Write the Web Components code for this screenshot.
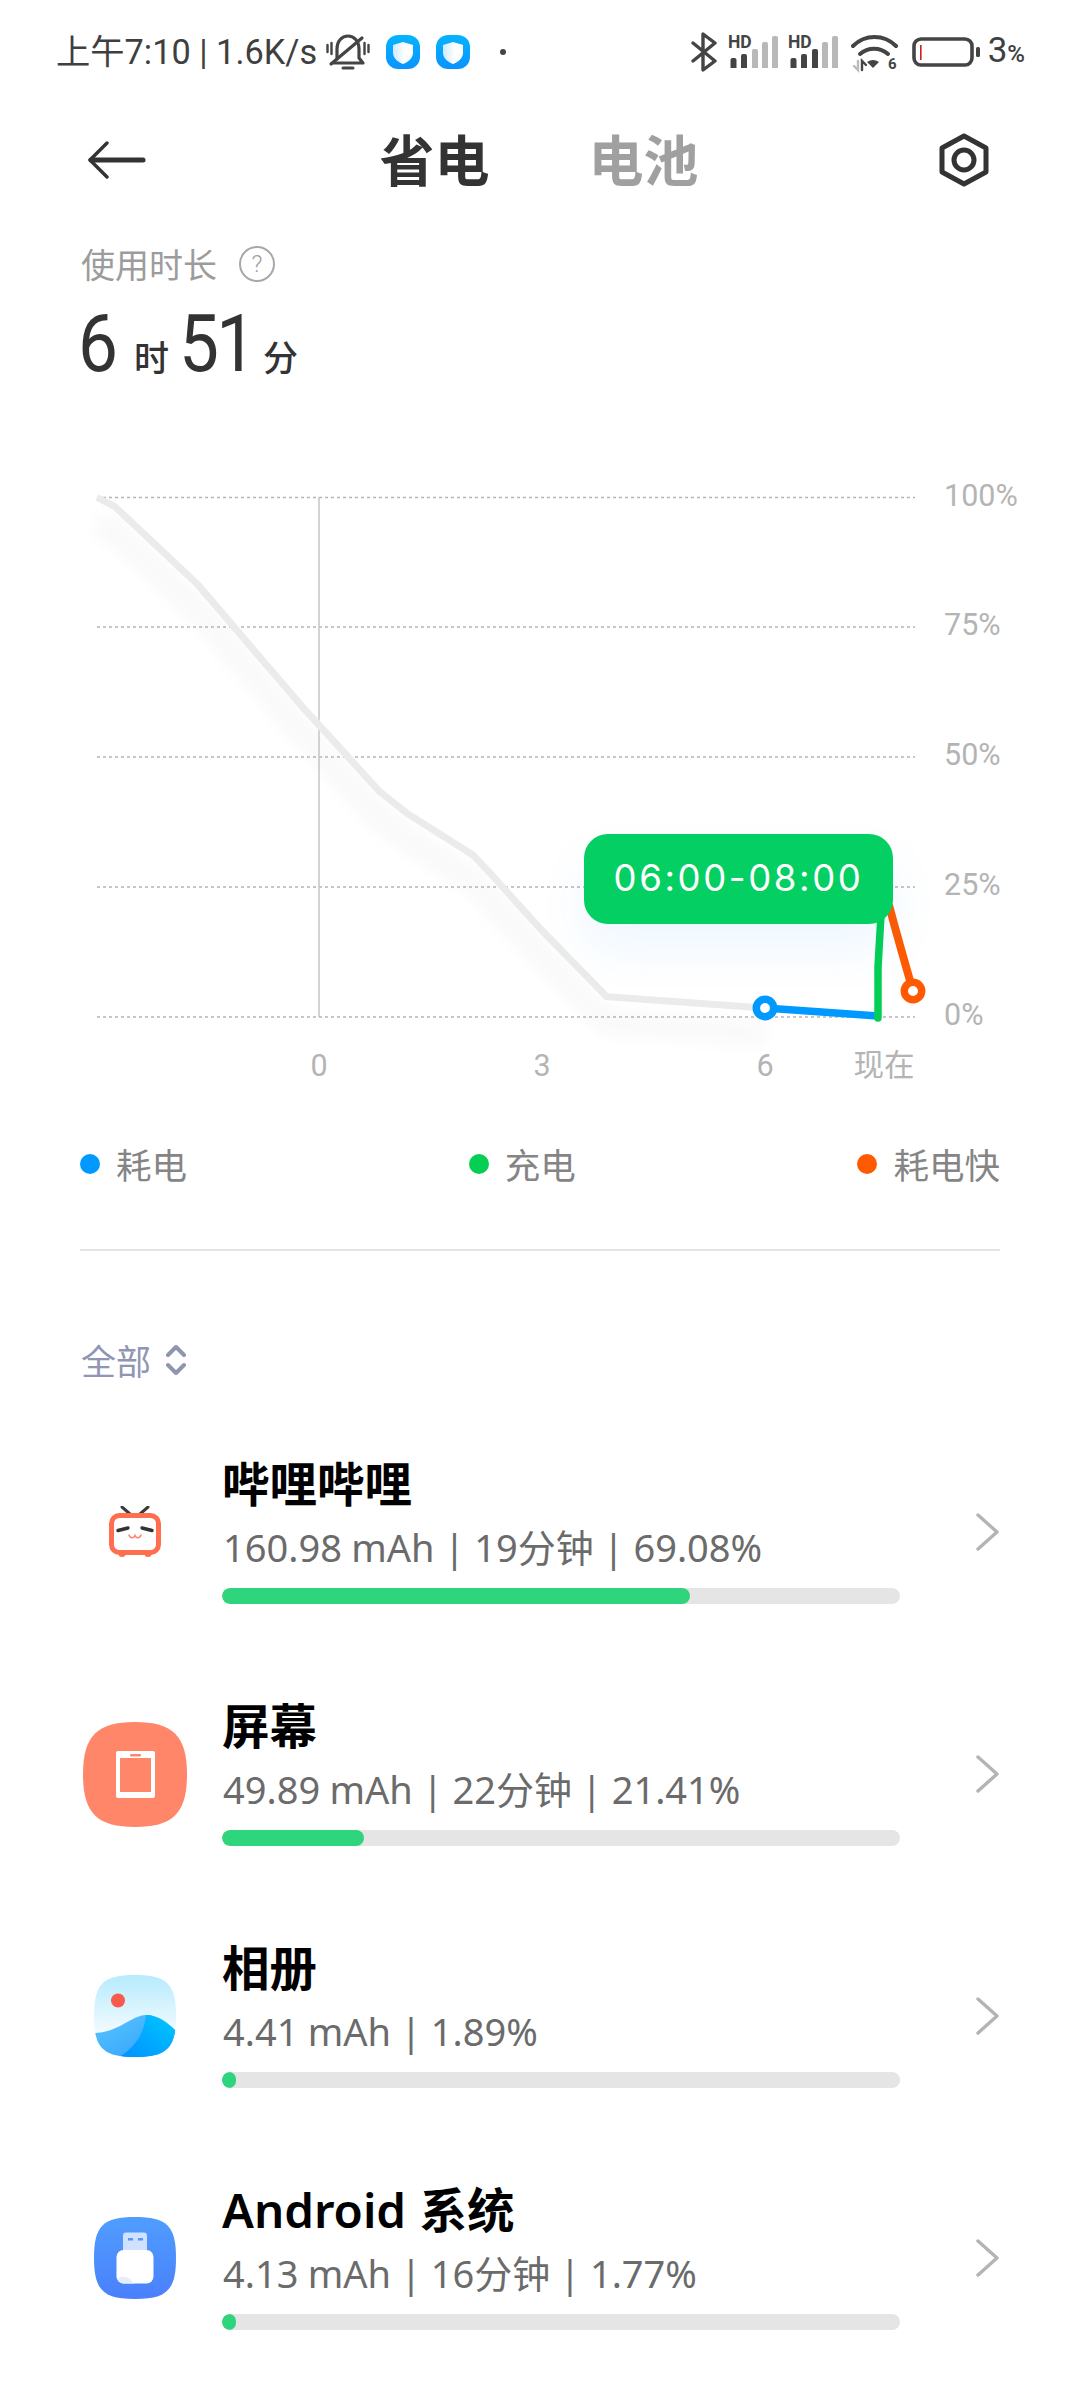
<!DOCTYPE html>
<html lang="zh">
<head>
<meta charset="utf-8">
<title>省电</title>
<style>
  html, body { margin: 0; background: #fff; }
  body { width: 1080px; height: 2400px; overflow: hidden; font-family: Roboto, "Noto Sans CJK SC", sans-serif; }
</style>
</head>
<body>
<status-bar></status-bar>
<nav-header></nav-header>
<usage-summary hours="6" minutes="51"></usage-summary>
<battery-chart></battery-chart>
<chart-legend></chart-legend>
<filter-row label="全部"></filter-row>

<app-row name="哔哩哔哩" detail="160.98 mAh | 19分钟 | 69.08%" percent="69">
  <svg slot="icon" width="52" height="52" viewBox="0 0 52 52">
    <path d="M13 1 21 8M39 1 31 8" stroke="#3b3b3b" stroke-width="3" stroke-linecap="round"/>
    <circle cx="13" cy="47.500" r="3.600" fill="#ff6f4f"/><circle cx="39" cy="47.500" r="3.600" fill="#ff6f4f"/>
    <rect x="2.500" y="9.500" width="47" height="37" rx="8" fill="#fff" stroke="#ff6f4f" stroke-width="5"/>
    <path d="M9 24.500 19 22M33 22 43 24.500" stroke="#333" stroke-width="3.400" stroke-linecap="round"/>
    <path d="M20 29c1 3.500 5 3.500 6 .5 1 3 5 3 6-.5" fill="none" stroke="#ff8378" stroke-width="1.500" stroke-linecap="round"/>
  </svg>
</app-row>
<app-row name="屏幕" detail="49.89 mAh | 22分钟 | 21.41%" percent="21">
  <svg slot="icon" width="104" height="105" viewBox="0 0 104 105">
    <path d="M52 0C90 0 104 14 104 52.500S90 105 52 105 0 91 0 52.500 14 0 52 0Z" fill="#ff8668"/>
    <rect x="33" y="29" width="39" height="47" rx="2" fill="#fff"/>
    <rect x="37" y="36" width="31" height="34" fill="#ff8668"/>
    <rect x="47" y="32" width="11" height="2.500" rx="1.200" fill="#ff8668"/>
  </svg>
</app-row>
<app-row name="相册" detail="4.41 mAh | 1.89%" percent="1">
  <svg slot="icon" width="82" height="82" viewBox="0 0 82 82">
    <defs>
      <linearGradient id="sky" x1="0" y1="0" x2="0" y2="1"><stop offset="0" stop-color="#b6ebfd"/><stop offset=".7" stop-color="#f2fbff"/></linearGradient>
      <linearGradient id="sea" x1="0" y1="0" x2="1" y2="1"><stop offset="0" stop-color="#5ac6ff"/><stop offset="1" stop-color="#2f9dfc"/></linearGradient>
      <linearGradient id="sea2" x1="1" y1="0" x2="0" y2="1"><stop offset="0" stop-color="#00c8ff"/><stop offset="1" stop-color="#0090ff"/></linearGradient>
      <clipPath id="sq"><path d="M41 0C73 0 82 9 82 41S73 82 41 82 0 73 0 41 9 0 41 0Z"/></clipPath>
    </defs>
    <g clip-path="url(#sq)">
      <rect width="82" height="82" fill="url(#sky)"/>
      <path d="M0 58C24 58 38 40 52 40 64 40 74 48 82 56V82H0Z" fill="url(#sea)"/>
      <path d="M25 82C42 72 50 58 52 40 64 40 74 48 82 56V82Z" fill="url(#sea2)"/>
      <ellipse cx="24" cy="25.500" rx="7" ry="7" fill="#fa5a4c"/>
    </g>
  </svg>
</app-row>
<app-row name="Android 系统" detail="4.13 mAh | 16分钟 | 1.77%" percent="1">
  <svg slot="icon" width="82" height="82" viewBox="0 0 82 82">
    <defs><linearGradient id="blue" x1="0" y1="0" x2="0" y2="1"><stop offset="0" stop-color="#4f9dff"/><stop offset="1" stop-color="#4a80fb"/></linearGradient></defs>
    <path d="M41 0C73 0 82 9 82 41S73 82 41 82 0 73 0 41 9 0 41 0Z" fill="url(#blue)"/>
    <rect x="29" y="15.500" width="24" height="20" rx="3" fill="#cfe1ff"/>
    <rect x="34" y="21" width="5" height="2.500" fill="#5a97fb"/><rect x="44" y="21" width="5" height="2.500" fill="#5a97fb"/>
    <rect x="22.500" y="33" width="37" height="33.500" rx="7" fill="#fff"/>
    <path d="M24 61C30 58 36 60 40 66.500H29C27 66.500 25 64 24 61Z" fill="#e6eefb"/>
  </svg>
</app-row>

<script>
class StatusBar extends HTMLElement {
  constructor() {
    super();
    this.shadowDOM = this.attachShadow({mode: 'open'});
  }
  connectedCallback() {
    this.shadowDOM.innerHTML = `${this.templateCss()}${this.template()}`;
  }
  bars(dark) {
    const xs = [2.5, 13, 24, 34, 44], tops = [23, 19, 14, 7, 1];
    return xs.map((x, i) => `<path d="M${x} 33V${tops[i] + 2}q0-2 2-2h2q2 0 2 2V33Z" fill="${i < dark ? '#444' : '#b8b8b8'}"/>`).join('');
  }
  signal(dark) {
    return `<svg width="50" height="42" viewBox="0 -4 50 42">
      <text x="0" y="13" font-family="Roboto" font-weight="700" font-size="17.500" fill="#444">HD</text>${this.bars(dark)}
    </svg>`;
  }
  shield() {
    return `<svg width="34" height="34" viewBox="0 0 34 34">
      <defs><linearGradient id="sb" x1="0" y1="0" x2="0" y2="1"><stop offset="0" stop-color="#05b4ff"/><stop offset="1" stop-color="#0a93ff"/></linearGradient>
      <linearGradient id="sf" x1="0" y1="0" x2="1" y2="0"><stop offset="0" stop-color="#cdeafd"/><stop offset=".6" stop-color="#fff"/></linearGradient></defs>
      <rect width="34" height="34" rx="12" fill="url(#sb)"/>
      <path d="M17 7 27 10V18C27 23 22 27 17 29 12 27 7 23 7 18V10Z" fill="url(#sf)"/>
    </svg>`;
  }
  template() {
    return `
      <div class="left">
        <span class="clock">上午7:10 | 1.6K/s</span>
        <svg class="bell" width="44" height="40" viewBox="0 0 44 40" fill="none" stroke="#444" stroke-width="3.200" stroke-linecap="round" stroke-linejoin="round">
          <path d="M11 27V17C11 9 16 4 22 4 28 4 33 9 33 17V26L37 31H7"/>
          <path d="M5 32 36 6"/>
          <path d="M1.500 13V20M5.500 11V22M42.500 13V20M38.500 11V22" stroke-width="2.400"/>
          <path d="M17 36H27" stroke-width="3"/>
        </svg>
        ${this.shield()}${this.shield()}
        <i class="dot"></i>
      </div>
      <div class="right">
        <svg class="bt" width="26" height="40" viewBox="0 0 26 40" fill="none" stroke="#444" stroke-width="3.400" stroke-linecap="round" stroke-linejoin="round">
          <path d="M2 11 24 29 12 38V2L24 11 2 29"/>
        </svg>
        ${this.signal(2)}${this.signal(3)}
        <svg class="wifi" width="48" height="44" viewBox="0 -4 48 44" fill="none" stroke="#444" stroke-linecap="round">
          <path d="M2 12C14 0 33 0 45 12" stroke-width="4"/>
          <path d="M9 20C17 13 29 13 37 20" stroke-width="4"/>
          <path d="M16 28Q22 24 28 28L22 34Z" fill="#444" stroke="none"/>
          <path d="M7 27V36L3 32" stroke="#bbb" stroke-width="2.400"/><path d="M11 36V27L15 31" stroke-width="2.400"/>
          <text x="37" y="35" font-family="Roboto" font-weight="700" font-size="15" fill="#444" stroke="none">6</text>
        </svg>
        <svg class="batt" width="70" height="30" viewBox="0 0 70 30">
          <rect x="2" y="2" width="58" height="26" rx="7" fill="none" stroke="#444" stroke-width="3.600"/>
          <rect x="8" y="8" width="1.600" height="15" fill="#d0201c"/>
          <rect x="64" y="10" width="4" height="10" rx="1.500" fill="#444"/>
        </svg>
        <span class="pct">3<small>%</small></span>
      </div>`;
  }
  templateCss() {
    return `
      <style>
        :host { display: flex; justify-content: space-between; align-items: center; height: 104px; padding: 0 55px 0 56px; color: #3f3f3f; box-sizing: border-box; }
        .left, .right { display: flex; align-items: center; }
        .clock { font: 400 34.300px/40px Roboto, "Noto Sans CJK SC", sans-serif; white-space: nowrap; width: 270px; }
        .left svg + svg { margin-left: 16px; }
        .dot { width: 6px; height: 6px; border-radius: 50%; background: #444; margin-left: 30px; }
        svg { display: block; }
        .bt { margin-right: 11px; }
        .right svg + svg { margin-right: 10px; }
        .right .wifi { margin-left: 3px; margin-right: 13px; }
        .right .batt { margin-right: 6px; }
        .pct { font: 400 35px/40px Roboto, sans-serif; white-space: nowrap; }
        .pct small { font-size: 24px; font-weight: 500; }
      </style>`;
  }
}
customElements.define('status-bar', StatusBar);

class NavHeader extends HTMLElement {
  constructor() {
    super();
    this.shadowDOM = this.attachShadow({mode: 'open'});
  }
  connectedCallback() {
    this.shadowDOM.innerHTML = `
      <style>
        :host { display: grid; grid-template-columns: 1fr auto 1fr; align-items: center; height: 112px; padding: 0 88px 0 86px; box-sizing: border-box; }
        .tabs { display: flex; gap: 99px; font: 700 55px/60px "Noto Sans CJK SC", sans-serif; padding-bottom: 6px; }
        .active { color: #333; }
        .idle { color: #a0a0a0; }
        svg { display: block; }
        .back { margin-left: 2px; }
        .gear { justify-self: end; margin-right: 2px; }
      </style>
      <svg class="back" width="58" height="38" viewBox="0 0 58 38" fill="none" stroke="#333" stroke-linecap="round" stroke-linejoin="round">
        <path d="M19 2 2 19 19 36" stroke-width="3.400"/><path d="M3 19H55" stroke-width="5"/>
      </svg>
      <div class="tabs"><span class="active">省电</span><span class="idle">电池</span></div>
      <svg class="gear" width="52" height="54" viewBox="0 0 52 54" fill="none" stroke="#333" stroke-width="5" stroke-linejoin="round">
        <path d="M26 3 48 15V39L26 51 4 39V15Z"/><circle cx="26" cy="27" r="10"/>
      </svg>`;
  }
}
customElements.define('nav-header', NavHeader);

class UsageSummary extends HTMLElement {
  constructor() {
    super();
    this.shadowDOM = this.attachShadow({mode: 'open'});
  }
  connectedCallback() {
    const h = this.getAttribute('hours'), m = this.getAttribute('minutes');
    this.shadowDOM.innerHTML = `
      <style>
        :host { display: block; padding: 28px 0 0 81px; height: 224px; box-sizing: border-box; font-family: "Noto Sans CJK SC", sans-serif; }
        .label { display: flex; align-items: center; gap: 22px; font-size: 34px; line-height: 40px; color: #9c9c9c; }
        .ring { width: 32px; height: 32px; border: 2px solid #a8a8a8; border-radius: 50%; font: 300 24px/32px Roboto, sans-serif; text-align: center; color: #a0a0a0; }
        .value { display: flex; align-items: baseline; margin: 20px 0 0 -3px; color: #333; line-height: 80px; }
        .num { font: 400 79px/80px Roboto, sans-serif; display: inline-block; transform: scaleX(.9); transform-origin: left; white-space: nowrap; }
        .h { width: 41px; }
        .m { width: 76px; letter-spacing: -3px; }
        .unit { font-size: 35px; font-weight: 500; }
        .u1 { margin: 0 10px 0 15px; }
        .u2 { margin-left: 8px; }
      </style>
      <div class="label">使用时长<span class="ring">?</span></div>
      <div class="value"><span class="num h">${h}</span><span class="unit u1">时</span><span class="num m">${m}</span><span class="unit u2">分</span></div>`;
  }
}
customElements.define('usage-summary', UsageSummary);

class BatteryChart extends HTMLElement {
  constructor() {
    super();
    this.shadowDOM = this.attachShadow({mode: 'open'});
  }
  connectedCallback() {
    const top = 440;
    const ys = [497.5, 627, 757, 887, 1017].map(y => y - top);
    const labels = ['100%', '75%', '50%', '25%', '0%'];
    const grid = ys.map((y, i) => `
      <line x1="97" x2="915" y1="${y}" y2="${y}" stroke="#b4b4b4" stroke-width="1.500" stroke-dasharray="3 3"/>
      <text x="944" y="${y + 8}" class="tick">${labels[i]}</text>`).join('');
    const ticks = [[319, '0'], [542, '3'], [765, '6'], [884, '现在']].map(([x, t]) =>
      `<text x="${x}" y="${1076 - top}" text-anchor="middle" class="tick">${t}</text>`).join('');
    const line = [[97, 497.5], [115, 506.7], [197.7, 584.5], [306, 711], [319, 725], [380, 792], [408, 814], [473, 855], [490, 873], [508, 893], [542, 930.5], [606.7, 996.7], [764.7, 1008]]
      .map(p => `${p[0]},${p[1] - top}`).join(' ');
    this.shadowDOM.innerHTML = `
      <style>
        :host { display: block; position: relative; height: 680px; }
        svg { display: block; }
        .tick { font: 400 30.500px Roboto, "Noto Sans CJK SC", sans-serif; fill: #b4b4b4; }
        .tip { position: absolute; left: 584px; top: 394px; width: 309px; height: 90px; border-radius: 24px; background: #04cf63; color: #fff; font: 400 36.500px/88px Inter, Roboto, sans-serif; letter-spacing: 2.600px; text-align: center; box-shadow: 0 26px 50px rgba(0, 140, 255, .07); }
      </style>
      <svg width="1080" height="680" viewBox="0 0 1080 680">
        <defs><filter id="soft" x="-10%" y="-10%" width="120%" height="120%"><feGaussianBlur stdDeviation="8"/></filter></defs>
        <polyline points="${line}" transform="translate(0 26)" fill="none" stroke="#f9f9f9" stroke-width="24" filter="url(#soft)"/>
        <path d="M772 ${1036 - top}H878" stroke="#dcf1ec" stroke-width="22" filter="url(#soft)"/>
        ${grid}
        <line x1="319" x2="319" y1="${497 - top}" y2="${1017 - top}" stroke="#c4c4c4" stroke-width="1.500"/>
        <polyline points="${line}" fill="none" stroke="#ebebeb" stroke-width="7"/>
        <path d="M765 ${1008 - top}L878 ${1016 - top}" stroke="#0099ff" stroke-width="7.500"/>
        <path d="M878 ${1018 - top}V${967 - top}L881 ${915 - top}" fill="none" stroke="#04cf54" stroke-width="7.500" stroke-linecap="round"/>
        <path d="M889 ${905 - top}Q896 ${932 - top} 913 ${991 - top}" fill="none" stroke="#ff5a00" stroke-width="8"/>
        <circle cx="765" cy="${1008 - top}" r="8.700" fill="#fff" stroke="#0099ff" stroke-width="7.500"/>
        <circle cx="913" cy="${991 - top}" r="8.700" fill="#fff" stroke="#ff5a00" stroke-width="7.500"/>
        ${ticks}
      </svg>
      <div class="tip">06:00-08:00</div>`;
  }
}
customElements.define('battery-chart', BatteryChart);

class ChartLegend extends HTMLElement {
  constructor() {
    super();
    this.shadowDOM = this.attachShadow({mode: 'open'});
  }
  connectedCallback() {
    const items = [['#0099ff', '耗电'], ['#04cf54', '充电'], ['#ff5a00', '耗电快']];
    this.shadowDOM.innerHTML = `
      <style>
        :host { display: block; margin: 0 80px; height: 131px; border-bottom: 2px solid #e4e4e4; padding-top: 22px; box-sizing: border-box; }
        .row { display: flex; justify-content: space-between; font: 400 35.500px/44px "Noto Sans CJK SC", sans-serif; color: #858585; }
        .item { display: flex; align-items: center; gap: 16px; }
        i { width: 20px; height: 20px; border-radius: 50%; }
      </style>
      <div class="row">${items.map(([c, t]) => `<span class="item"><i style="background:${c}"></i>${t}</span>`).join('')}</div>`;
  }
}
customElements.define('chart-legend', ChartLegend);

class FilterRow extends HTMLElement {
  constructor() {
    super();
    this.shadowDOM = this.attachShadow({mode: 'open'});
  }
  connectedCallback() {
    this.shadowDOM.innerHTML = `
      <style>
        :host { display: flex; align-items: center; gap: 14px; height: 189px; padding: 28px 0 0 81px; box-sizing: border-box; font: 400 35px/40px "Noto Sans CJK SC", sans-serif; color: #8f96b4; }
      </style>
      <span>${this.getAttribute('label')}</span>
      <svg width="22" height="30" viewBox="0 0 22 30" fill="none" stroke="#8f96b4" stroke-width="4" stroke-linecap="round" stroke-linejoin="round">
        <path d="M3 10 11 2 19 10M3 20 11 28 19 20"/>
      </svg>`;
  }
}
customElements.define('filter-row', FilterRow);

class AppRow extends HTMLElement {
  constructor() {
    super();
    this.shadowDOM = this.attachShadow({mode: 'open'});
  }
  connectedCallback() {
    this.shadowDOM.innerHTML = `
      <style>
        :host { display: grid; grid-template-columns: 222px 678px 1fr; height: 242px; box-sizing: border-box; padding-top: 20px; }
        .icon { height: 144px; display: flex; align-items: center; justify-content: center; padding-left: 48px; box-sizing: border-box; }
        .body { min-width: 0; }
        .name { font: 600 47.500px/48px "Noto Sans", "Noto Sans CJK SC", sans-serif; color: #000; word-spacing: 1px; white-space: nowrap; }
        .detail { margin-top: 14px; font: 400 38px/50px "Noto Sans", "Noto Sans CJK SC", sans-serif; color: #6b6b6b; word-spacing: -.5px; padding-left: 1px; white-space: nowrap; }
        .track { margin-top: 16px; height: 16px; border-radius: 8px; background: #e5e5e5; overflow: hidden; }
        .fill { height: 100%; min-width: 14px; border-radius: 8px; background: #2fd57d; }
        .chev { display: flex; align-items: center; padding-left: 75px; height: 144px; }
      </style>
      <div class="icon"><slot name="icon"></slot></div>
      <div class="body">
        <div class="name">${this.getAttribute('name')}</div>
        <div class="detail">${this.getAttribute('detail')}</div>
        <div class="track"><div class="fill" style="width:${this.getAttribute('percent')}%"></div></div>
      </div>
      <div class="chev">
        <svg width="24" height="38" viewBox="0 0 24 38" fill="none" stroke="#b4b4b4" stroke-width="3.400" stroke-linecap="round" stroke-linejoin="round"><path d="M3 2 22 19 3 36"/></svg>
      </div>`;
  }
}
customElements.define('app-row', AppRow);
</script>
</body>
</html>
